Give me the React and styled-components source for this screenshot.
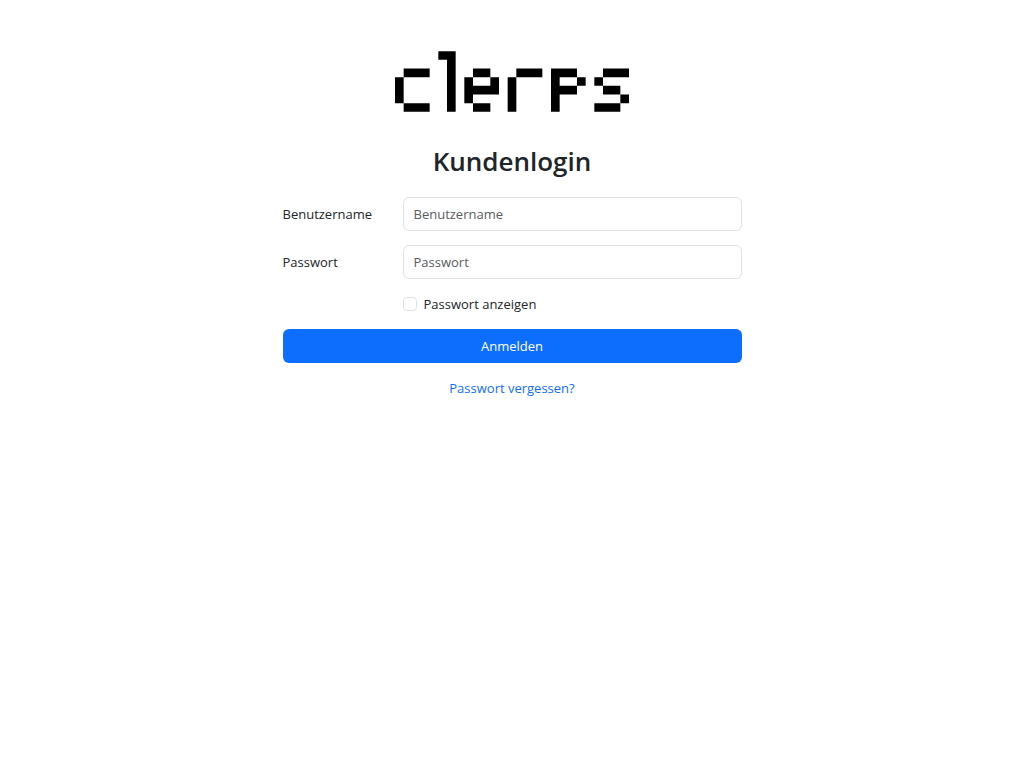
import React, { useState } from "react";
import styled, { createGlobalStyle, css } from "styled-components";

const GlobalStyle = createGlobalStyle`
  *, *::before, *::after { box-sizing: border-box; }
  body {
    margin: 0;
    background: #fff;
    color: #212529;
    font-family: "Segoe UI", "Open Sans", "Noto Sans", sans-serif;
    font-size: 13px;
    line-height: 22px;
  }
`;

const Page = styled.main`
  display: flex;
  flex-direction: column;
  align-items: center;
  padding: 51px 12px 24px;
`;

const Logo = styled.svg`
  display: block;
  width: 234px;
  height: 61px;
  max-width: 100%;
`;

const Title = styled.h1`
  margin: 32px 0 19px;
  font-size: 26px;
  font-weight: 600;
  line-height: 34px;
`;

const Form = styled.form`
  display: flex;
  flex-direction: column;
  gap: 14px;
  width: 100%;
  max-width: 459px;
`;

const Row = styled.div`
  display: grid;
  grid-template-columns: 120px 1fr;
  align-items: center;
`;

const control = css`
  width: 100%;
  height: 34px;
  border-radius: 6px;
  font: inherit;
`;

const TextInput = styled.input`
  ${control}
  padding: 5px 10px;
  border: 1px solid #dee2e6;
  background: #fff;
  color: #212529;

  &::placeholder { color: #595c5f; opacity: 1; }
  &:focus { outline: 3px solid #c2dbfe; border-color: #86b7fe; }
`;

const CheckCell = styled.div`
  grid-column: 2;
  display: flex;
  align-items: center;
  gap: 7px;
`;

const Checkbox = styled.input`
  appearance: none;
  width: 14px;
  height: 14px;
  margin: 0;
  border: 1px solid #dee2e6;
  border-radius: 4px;
  background: #fff;

  &:checked { background: #0d6efd; border-color: #0d6efd; }
`;

const SubmitButton = styled.button`
  ${control}
  border: 0;
  background: #0d6efd;
  color: #fff;
  cursor: pointer;
`;

const ForgotLink = styled.a`
  align-self: center;
  color: #0d6efd;
  text-decoration: none;

  &:hover { text-decoration: underline; }
`;

function ClerpsLogo() {
  return (
    <Logo viewBox="0 0 27 7" role="img" aria-label="clerps">
      {/* c */}
      <path d="M1 2h3v1H1zM0 3h1v3H0zM1 6h3v1H1z" />
      {/* l */}
      <path d="M5 0h2v7H6V1H5z" />
      {/* e */}
      <path d="M9 2h2v1H9zM8 3h1v1h2V3h1v2H9v1H8zM9 6h2v1H9z" />
      {/* r */}
      <path d="M14 2h3v1h-3zM13 3h1v4h-1z" />
      {/* p */}
      <path d="M18 2h3v1h-2v1h2v1h-2v2h-1zM21 3h1v1h-1z" />
      {/* s */}
      <path d="M24 2h3v1h-3zM23 3h1v1h-1zM24 4h2v1h-2zM26 5h1v1h-1zM23 6h3v1h-3z" />
    </Logo>
  );
}

export default function App() {
  const [showPassword, setShowPassword] = useState(false);

  return (
    <>
      <GlobalStyle />
      <Page>
        <ClerpsLogo />
        <Title>Kundenlogin</Title>
        <Form onSubmit={(e) => e.preventDefault()}>
          <Row>
            <label htmlFor="username">Benutzername</label>
            <TextInput id="username" type="text" placeholder="Benutzername" />
          </Row>
          <Row>
            <label htmlFor="password">Passwort</label>
            <TextInput
              id="password"
              type={showPassword ? "text" : "password"}
              placeholder="Passwort"
            />
          </Row>
          <Row>
            <CheckCell>
              <Checkbox
                id="show-password"
                type="checkbox"
                checked={showPassword}
                onChange={(e) => setShowPassword(e.target.checked)}
              />
              <label htmlFor="show-password">Passwort anzeigen</label>
            </CheckCell>
          </Row>
          <SubmitButton type="submit">Anmelden</SubmitButton>
          <ForgotLink href="#">Passwort vergessen?</ForgotLink>
        </Form>
      </Page>
    </>
  );
}
